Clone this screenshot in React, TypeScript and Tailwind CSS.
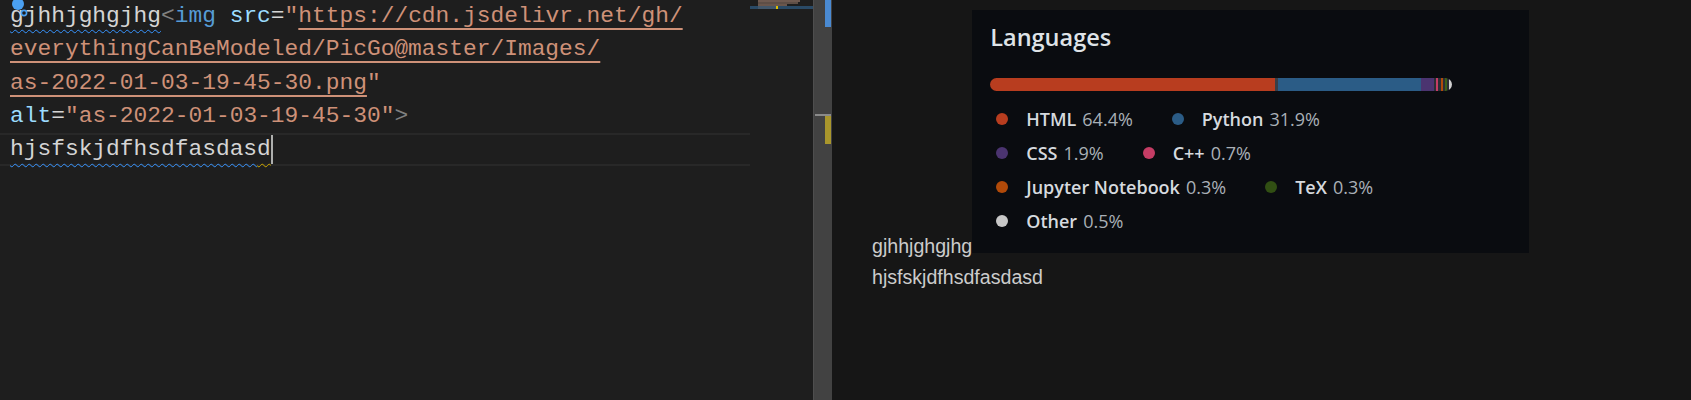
import React from 'react';

const languages = [
  { name: 'HTML', pct: '64.4%', color: 'bg-[#b83d1f]' },
  { name: 'Python', pct: '31.9%', color: 'bg-[#2b5c86]' },
  { name: 'CSS', pct: '1.9%', color: 'bg-[#4b3470]' },
  { name: 'C++', pct: '0.7%', color: 'bg-[#c53d65]' },
  { name: 'Jupyter Notebook', pct: '0.3%', color: 'bg-[#b14a09]' },
  { name: 'TeX', pct: '0.3%', color: 'bg-[#314f13]' },
  { name: 'Other', pct: '0.5%', color: 'bg-[#c8c8c8]' },
];

const legendRows = [[0, 1], [2, 3], [4, 5], [6]];

const LegendItem = ({ name, pct, color }: { name: string; pct: string; color: string }) => (
  <div className="flex items-center">
    <div className="w-[24px] flex justify-center">
      <div className={`w-[12px] h-[12px] rounded-full ${color}`} />
    </div>
    <span className="ml-[12px] font-semibold text-[#d6dadf]">{name}</span>
    <span className="ml-[6px] text-[#a9b0b7]">{pct}</span>
  </div>
);

const LanguagesCard = () => (
  <span className="inline-block align-baseline overflow-hidden w-[557px] h-[243px] bg-[#0a0c10] pl-[18px] font-['Open_Sans',sans-serif]">
    <div className="pt-[10px] text-[23.5px] leading-[34px] font-semibold text-[#dfe3e7]">Languages</div>
    {/* Progress bar */}
    <div className="mt-[24px] flex h-[13px] w-[462px] rounded-full overflow-hidden">
      <div className="w-[285px] bg-[#b83d1f]" />
      <div className="w-[3px] bg-[#3a3f47]" />
      <div className="w-[143px] bg-[#2b5c86]" />
      <div className="w-[13px] bg-[#4b3470]" />
      <div className="w-[2px] bg-[#2a2e35]" />
      <div className="w-[2px] bg-[#c53d65]" />
      <div className="w-[3px] bg-[#2a2e35]" />
      <div className="w-[2px] bg-[#b14a09]" />
      <div className="w-[2px] bg-[#2a2e35]" />
      <div className="w-[2px] bg-[#3d6117]" />
      <div className="w-[2px] bg-[#2a2e35]" />
      <div className="w-[3px] bg-[#d0d0d0]" />
    </div>
    {/* Legend */}
    <div className="mt-[11px] flex flex-col text-[18px] leading-[34px]">
      {legendRows.map((row, i) => (
        <div key={i} className="flex gap-[33px]">
          {row.map((idx) => (
            <LegendItem key={idx} {...languages[idx]} />
          ))}
        </div>
      ))}
    </div>
  </span>
);

const Editor = () => (
  <div className="relative w-[813px] h-full bg-[#1e1e1e] flex font-['Liberation_Mono',monospace] text-[22.88px] text-[#d4d4d4]">
    <div className="relative w-[750px] flex flex-col whitespace-pre">
      <div className="h-[33.25px] leading-[33.25px] pl-[10px]">
        <span className="underline decoration-wavy decoration-[#3794ff] decoration-1 underline-offset-[7px]">gjhhjghgjhg</span>
        <span className="text-[#808080]">&lt;</span>
        <span className="text-[#569cd6]">img</span>{' '}
        <span className="text-[#9cdcfe]">src</span>
        <span>=</span>
        <span className="text-[#ce9178]">"</span>
        <span className="text-[#ce9178] underline decoration-2 underline-offset-[6px]">https://cdn.jsdelivr.net/gh/</span>
      </div>
      <div className="h-[33.25px] leading-[33.25px] pl-[10px]">
        <span className="text-[#ce9178] underline decoration-2 underline-offset-[6px]">everythingCanBeModeled/PicGo@master/Images/</span>
      </div>
      <div className="h-[33.25px] leading-[33.25px] pl-[10px]">
        <span className="text-[#ce9178] underline decoration-2 underline-offset-[6px]">as-2022-01-03-19-45-30.png</span>
        <span className="text-[#ce9178]">"</span>
      </div>
      <div className="h-[33.25px] leading-[33.25px] pl-[10px]">
        <span className="text-[#9cdcfe]">alt</span>
        <span>=</span>
        <span className="text-[#ce9178]">"as-2022-01-03-19-45-30"</span>
        <span className="text-[#808080]">&gt;</span>
      </div>
      <div className="h-[33.25px] leading-[29.25px] pl-[10px] border-y-2 border-[#282828] flex items-stretch">
        <span className="underline decoration-wavy decoration-[#3794ff] decoration-1 underline-offset-[8px]">hjsfskjdfhsdfasdas</span>
        <span className="underline decoration-wavy decoration-[#cca700] decoration-1 underline-offset-[8px]">d</span>
        <span className="w-[2px] bg-[#aeafad]" />
      </div>
      {/* code action / copilot marker */}
      <svg className="absolute left-[10px] top-0" width="22" height="18" viewBox="0 0 22 18">
        <circle cx="8" cy="4" r="6" fill="#4a9ff0" />
        <circle cx="14" cy="13" r="2.6" fill="#1e1e1e" stroke="#4a9ff0" strokeWidth="1.6" />
      </svg>
    </div>
    {/* Minimap */}
    <div className="w-[63px] pl-[8px] flex flex-col">
      <div className="h-[2px] w-[42px] bg-[#6f5a50]" />
      <div className="h-[2px] w-[40px] bg-[#5e4e46]" />
      <div className="h-[2px] w-[29px] bg-[#6a564c]" />
      <div className="-ml-[8px] pl-[8px] h-[3px] bg-[#2a4a66] flex">
        <div className="w-[18px] bg-[#43576a]" />
        <div className="w-[2px] bg-[#e0c000]" />
      </div>
    </div>
  </div>
);

const Scrollbar = () => (
  <div className="relative w-[19px] h-full bg-[#424242] border-l border-[#4e4e4e]">
    <div className="absolute right-[1px] top-0 w-[6px] h-[27px] bg-[#4a8ad2]" />
    <div className="absolute left-[1px] right-[1px] top-[114px] h-[2px] bg-[#8a8a8a]" />
    <div className="absolute right-[1px] top-[116px] w-[6px] h-[28px] bg-[#a9962c]" />
  </div>
);

export default function App() {
  return (
    <div className="flex w-[1691px] h-[400px] overflow-hidden">
      <Editor />
      <Scrollbar />
      <div className="flex-1 h-full bg-[#161616] pl-[40px] pt-[10px] font-['Liberation_Sans',Arial,sans-serif] text-[19.6px] leading-[30.8px] text-[#cccccc]">
        <p>
          gjhhjghgjhg<LanguagesCard />
          <br />
          hjsfskjdfhsdfasdasd
        </p>
      </div>
    </div>
  );
}
